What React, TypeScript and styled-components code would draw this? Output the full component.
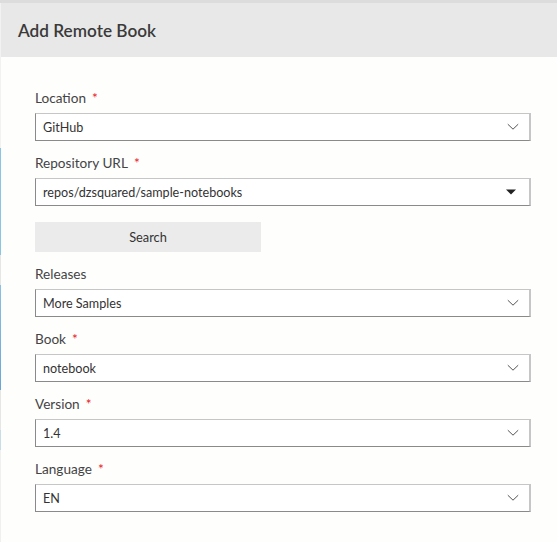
import React, { useState } from 'react';
import styled, { createGlobalStyle } from 'styled-components';

const GlobalStyle = createGlobalStyle`
  html, body {
    margin: 0;
    padding: 0;
    background: #fefefd;
  }
  body {
    font-family: Lato, "Open Sans", "Liberation Sans", sans-serif;
    color: #333;
  }
`;

const Pagina = styled.div`
  display: flex;
  width: 557px;
  height: 542px;
  overflow: hidden;
`;

const BordeFondo = styled.div`
  width: 1px;
  flex-shrink: 0;
  background: linear-gradient(
    to bottom,
    #dcdcdc 0px,
    #dcdcdc 3px,
    #f2f2f2 3px,
    #f2f2f2 148px,
    #8cc4e6 148px,
    #8cc4e6 255px,
    #e6e6e6 255px,
    #e6e6e6 285px,
    #8cc0e3 285px,
    #6aa6d6 390px,
    #e6e6e6 390px,
    #e6e6e6 430px,
    #c8dcea 430px,
    #c8dcea 450px,
    #f0f0f0 450px
  );
`;

const Dialogo = styled.div`
  flex: 1;
  display: flex;
  flex-direction: column;
  background: #fefefd;
`;

const Cabecera = styled.div`
  height: 54px;
  border-top: 3px solid #dcdcdc;
  background: #e8e8e8;
  display: flex;
  align-items: center;
  padding-left: 17px;
`;

const Titulo = styled.h2`
  margin: 0;
  font-size: 17.2px;
  font-weight: 600;
  color: #3a3a3a;
`;

const Cuerpo = styled.div`
  display: flex;
  flex-direction: column;
  padding: 31px 26px 0 34px;
`;

const Campo = styled.div<{ $extra?: number }>`
  display: flex;
  flex-direction: column;
  margin-bottom: ${(p) => p.$extra ?? 12}px;
`;

const Etiqueta = styled.label`
  display: block;
  height: 20px;
  line-height: 20px;
  font-size: 13.6px;
  color: #444;
  margin-bottom: 5px;
`;

const Requerido = styled.span`
  color: #e81123;
  margin-left: 6px;
`;

const Caja = styled.div`
  position: relative;
  height: 28px;
  box-sizing: border-box;
  border-top: 1px solid #c6c6c6;
  border-left: 1px solid #8a8a8a;
  border-bottom: 1px solid #8a8a8a;
  border-right: 2px solid #c6c6c6;
  background: #fff;
  display: flex;
  align-items: center;
  padding: 0 8px 0 7px;
  font-size: 12.6px;
  color: #333;
`;

const Valor = styled.span`
  flex: 1;
`;

const Flecha = styled.svg`
  flex-shrink: 0;
  margin-right: 2px;
`;

const BotonBuscar = styled.button`
  width: 226px;
  height: 30px;
  border: none;
  background: #ebebeb;
  color: #333;
  font-family: inherit;
  font-size: 12.8px;
  cursor: pointer;
  margin-bottom: 12px;
  padding: 0;
  &:hover {
    background: #e0e0e0;
  }
`;

const Chevron = () => (
  <Flecha width="12" height="8" viewBox="0 0 12 8">
    <path d="M0.8 1.2 L6 6.2 L11.2 1.2" fill="none" stroke="#555" strokeWidth="1" />
  </Flecha>
);

const Triangulo = () => (
  <Flecha width="12" height="8" viewBox="0 0 12 8" style={{ marginRight: 4 }}>
    <path d="M1 1.5 L11 1.5 L6 6.5 Z" fill="#222" />
  </Flecha>
);

type CampoProps = {
  label: string;
  value: string;
  required?: boolean;
  combo?: boolean;
  extra?: number;
};

const CampoSelect = ({ label, value, required, combo, extra }: CampoProps) => (
  <Campo $extra={extra}>
    <Etiqueta>
      {label}
      {required && <Requerido>*</Requerido>}
    </Etiqueta>
    <Caja>
      <Valor>{value}</Valor>
      {combo ? <Triangulo /> : <Chevron />}
    </Caja>
  </Campo>
);

const App = () => {
  const [repo] = useState('repos/dzsquared/sample-notebooks');

  return (
    <>
      <GlobalStyle />
      <Pagina>
        <BordeFondo />
        <Dialogo>
          <Cabecera>
            <Titulo>Add Remote Book</Titulo>
          </Cabecera>
          <Cuerpo>
            <CampoSelect label="Location" value="GitHub" required />
            <CampoSelect label="Repository URL" value={repo} required combo extra={16} />
            <div>
              <BotonBuscar type="button">Search</BotonBuscar>
            </div>
            <CampoSelect label="Releases" value="More Samples" />
            <CampoSelect label="Book" value="notebook" required />
            <CampoSelect label="Version" value="1.4" required />
            <CampoSelect label="Language" value="EN" required />
          </Cuerpo>
        </Dialogo>
      </Pagina>
    </>
  );
};

export default App;
